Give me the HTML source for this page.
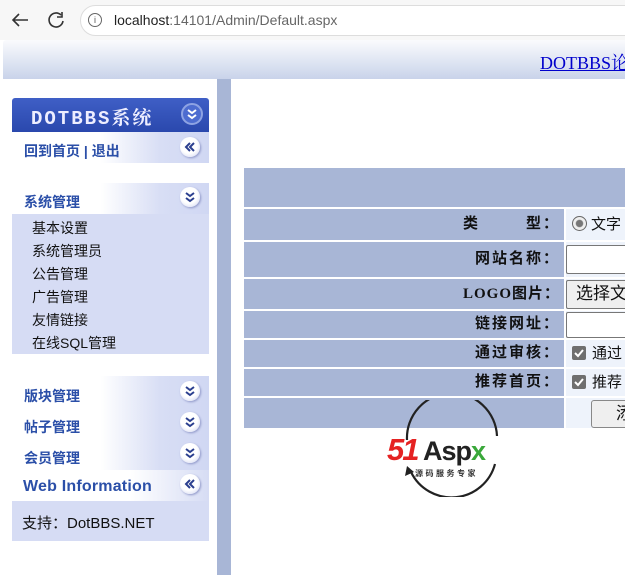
<!DOCTYPE html>
<html><head><meta charset="utf-8"><style>
*{margin:0;padding:0;box-sizing:border-box}
body{width:625px;height:575px;overflow:hidden;background:#fff;font-family:"Liberation Sans","Noto Sans CJK SC",sans-serif;position:relative}
.abs{position:absolute}
.hd{font-weight:bold;color:#2b4fa8;font-size:14px}
.grad{background:linear-gradient(90deg,#fff 0%,#fff 45%,#d8def5 75%,#d0d7f3 100%)}
.ic{position:absolute;width:20px;height:20px;border-radius:50%;background:radial-gradient(circle at 45% 40%,#fff 50%,#c9cfee 100%);box-shadow:1px 1px 2px #8f97c8}
.ic svg{position:absolute;left:0;top:0}
.row{position:absolute;left:244px;width:381px}
.lab{position:absolute;left:0;width:320px;height:100%;background:#a8b6d6;text-align:right;font-weight:bold;font-size:15px;color:#111;font-family:"Liberation Serif","Noto Sans CJK SC",sans-serif;padding-right:4px;letter-spacing:2px}
.val{position:absolute;left:322px;right:0;height:100%;background:#eef3fb;font-size:15px;color:#111}
.inp{position:absolute;left:0;top:3px;width:70px;bottom:3px;border:1px solid #777;border-radius:2px;background:#fff;border-right:none}
.cb{display:inline-block;width:14px;height:14px;background:#6f6f6f;border-radius:2px;vertical-align:-2px;margin:0 6px 0 6px;position:relative}
</style></head><body>
<div class="abs" style="left:0;top:0;width:625px;height:40px;background:#f7f7f7"></div>
<svg class="abs" style="left:10px;top:11px" width="20" height="18"><path d="M18 9H3M9 3L3 9l6 6" fill="none" stroke="#333" stroke-width="1.6"/></svg>
<svg class="abs" style="left:46px;top:10px" width="20" height="20"><path d="M15 5A7 7 0 1 0 17 11" fill="none" stroke="#333" stroke-width="1.6"/><path d="M16 2v5h-5" fill="none" stroke="#333" stroke-width="1.6"/></svg>
<div class="abs" style="left:80px;top:5px;width:560px;height:31px;border-radius:16px;background:#fff;border:1px solid #ddd"></div>
<div class="abs" style="left:88px;top:13px;width:14px;height:14px;border:1.3px solid #666;border-radius:50%;font-size:9px;text-align:center;line-height:12px;color:#555">i</div>
<div class="abs" style="left:114px;top:12px;font-size:14px;color:#222">localhost<span style="color:#666">:14101/Admin/Default.aspx</span></div>
<div class="abs" style="left:3px;top:40px;width:622px;height:39px;background:linear-gradient(#fafbfd,#c9d3ea);border-radius:3px 0 0 0"></div>
<div class="abs" style="left:540px;top:49px;font-size:18px;color:#00c;text-decoration:underline;font-family:'Liberation Serif','Noto Serif CJK SC',serif;white-space:nowrap">DOTBBS论坛</div>
<div class="abs" style="left:217px;top:79px;width:14px;height:496px;background:#a8b6d6"></div>
<div class="abs" style="left:12px;top:98px;width:197px;height:34px;background:linear-gradient(#3f5fc6,#2a48ad);border-radius:3px 3px 0 0"></div>
<div class="abs" style="left:31px;top:103px;color:#eef;font-size:19px;font-weight:bold;letter-spacing:2px;font-family:'Liberation Mono','Noto Serif CJK SC',monospace">DOTBBS系统</div>
<svg class="abs" style="left:180px;top:102px" width="24" height="24"><circle cx="12" cy="12" r="10" fill="#4d6cd0" stroke="#8ea3e3" stroke-width="2"/><path d="M8 8l4 3 4-3M8 13l4 3 4-3" fill="none" stroke="#fff" stroke-width="2"/></svg>
<div class="abs grad" style="left:12px;top:132px;width:197px;height:31px"></div>
<div class="abs hd" style="left:24px;top:141px">回到首页 | 退出</div>
<div class="ic" style="left:180px;top:137px"><svg width="20" height="20"><path d="M10 6l-4 4 4 4M14 6l-4 4 4 4" fill="none" stroke="#2b3f8f" stroke-width="2"/></svg></div>
<div class="abs grad" style="left:12px;top:183px;width:197px;height:31px"></div>
<div class="abs hd" style="left:24px;top:192px">系统管理</div>
<div class="ic" style="left:180px;top:187px"><svg width="20" height="20"><path d="M6 6l4 3 4-3M6 11l4 3 4-3" fill="none" stroke="#2b3f8f" stroke-width="2"/></svg></div>
<div class="abs" style="left:12px;top:214px;width:197px;height:140px;background:#d6dcf4"></div>
<div class="abs" style="left:32px;top:217px;font-size:14px;line-height:23px;color:#111">基本设置<br>系统管理员<br>公告管理<br>广告管理<br>友情链接<br>在线SQL管理</div>
<div class="abs grad" style="left:12px;top:376px;width:197px;height:125px"></div>
<div class="abs hd" style="left:24px;top:386px">版块管理</div>
<div class="ic" style="left:180px;top:381px"><svg width="20" height="20"><path d="M6 6l4 3 4-3M6 11l4 3 4-3" fill="none" stroke="#2b3f8f" stroke-width="2"/></svg></div>
<div class="abs hd" style="left:24px;top:417px">帖子管理</div>
<div class="ic" style="left:180px;top:412px"><svg width="20" height="20"><path d="M6 6l4 3 4-3M6 11l4 3 4-3" fill="none" stroke="#2b3f8f" stroke-width="2"/></svg></div>
<div class="abs hd" style="left:24px;top:448px">会员管理</div>
<div class="ic" style="left:180px;top:443px"><svg width="20" height="20"><path d="M6 6l4 3 4-3M6 11l4 3 4-3" fill="none" stroke="#2b3f8f" stroke-width="2"/></svg></div>
<div class="abs" style="left:12px;top:470px;width:197px;height:31px;background:linear-gradient(90deg,#fff,#fff 60%,#d6dcf4)"></div>
<div class="abs hd" style="left:23px;top:478px;font-size:16px;letter-spacing:0.2px">Web Information</div>
<div class="ic" style="left:180px;top:474px"><svg width="20" height="20"><path d="M10 6l-4 4 4 4M14 6l-4 4 4 4" fill="none" stroke="#2b3f8f" stroke-width="2"/></svg></div>
<div class="abs" style="left:12px;top:501px;width:197px;height:40px;background:#d6dcf4"></div>
<div class="abs" style="left:22px;top:512px;font-size:15px;color:#111">支持：DotBBS.NET</div>
<div class="row" style="top:168px;height:39px;background:#a8b6d6"></div>
<div class="row" style="top:209px;height:31px"><div class="lab" style="line-height:31px">类&nbsp;&nbsp;&nbsp;&nbsp;&nbsp;&nbsp;&nbsp;&nbsp;型：</div><div class="val" style="line-height:31px"><span style="display:inline-block;width:15px;height:15px;border-radius:50%;border:1px solid #666;background:radial-gradient(#777 35%,#eee 45%);vertical-align:-2px;margin:0 4px 0 6px"></span>文字链接</div></div>
<div class="row" style="top:242px;height:35px"><div class="lab" style="line-height:35px">网站名称：</div><div class="val"><div class="inp"></div></div></div>
<div class="row" style="top:279px;height:30px"><div class="lab" style="line-height:30px;letter-spacing:1px">LOGO图片：</div><div class="val"><div class="inp" style="top:1px;bottom:0;background:#efefef;font-size:17px;line-height:26px;padding-left:9px;white-space:nowrap;overflow:hidden;width:70px">选择文件</div></div></div>
<div class="row" style="top:311px;height:27px"><div class="lab" style="line-height:27px">链接网址：</div><div class="val"><div class="inp" style="top:1px;bottom:0"></div></div></div>
<div class="row" style="top:340px;height:27px"><div class="lab" style="line-height:27px">通过审核：</div><div class="val" style="line-height:27px"><span class="cb"><svg width="14" height="14" style="position:absolute;left:0;top:0"><path d="M3 7l3 3 5-6" fill="none" stroke="#fff" stroke-width="2"/></svg></span>通过</div></div>
<div class="row" style="top:369px;height:27px"><div class="lab" style="line-height:27px">推荐首页：</div><div class="val" style="line-height:27px"><span class="cb"><svg width="14" height="14" style="position:absolute;left:0;top:0"><path d="M3 7l3 3 5-6" fill="none" stroke="#fff" stroke-width="2"/></svg></span>推荐</div></div>
<div class="row" style="top:398px;height:30px"><div class="lab"></div><div class="val"><div style="position:absolute;left:25px;top:2px;width:60px;height:28px;border:1px solid #888;border-radius:3px;background:#efefef;font-size:17px;line-height:26px;padding-left:24px">添加</div></div></div>
<svg class="abs" style="left:385px;top:400px" width="135" height="97" viewBox="0 0 135 97">
<path d="M22 40 A45 45 0 0 1 112 36" fill="none" stroke="#222" stroke-width="2.2"/>
<path d="M110 64 A45 45 0 0 1 26 72" fill="none" stroke="#222" stroke-width="2.2"/>
<polygon points="22,66 20,76 29,72" fill="#222"/>
<text x="2" y="60" font-family="Liberation Sans,sans-serif" font-size="31" font-weight="bold" font-style="italic" fill="#e52222" letter-spacing="-2">51</text>
<text x="38" y="60" font-family="Liberation Sans,sans-serif" font-size="27" font-weight="bold" fill="#222" letter-spacing="-1">Asp<tspan fill="#3aa83a">x</tspan></text>
<text x="30" y="76" font-family="Noto Sans CJK SC,sans-serif" font-size="8" font-weight="bold" fill="#333" letter-spacing="2.5">源码服务专家</text>
</svg>
</body></html>
